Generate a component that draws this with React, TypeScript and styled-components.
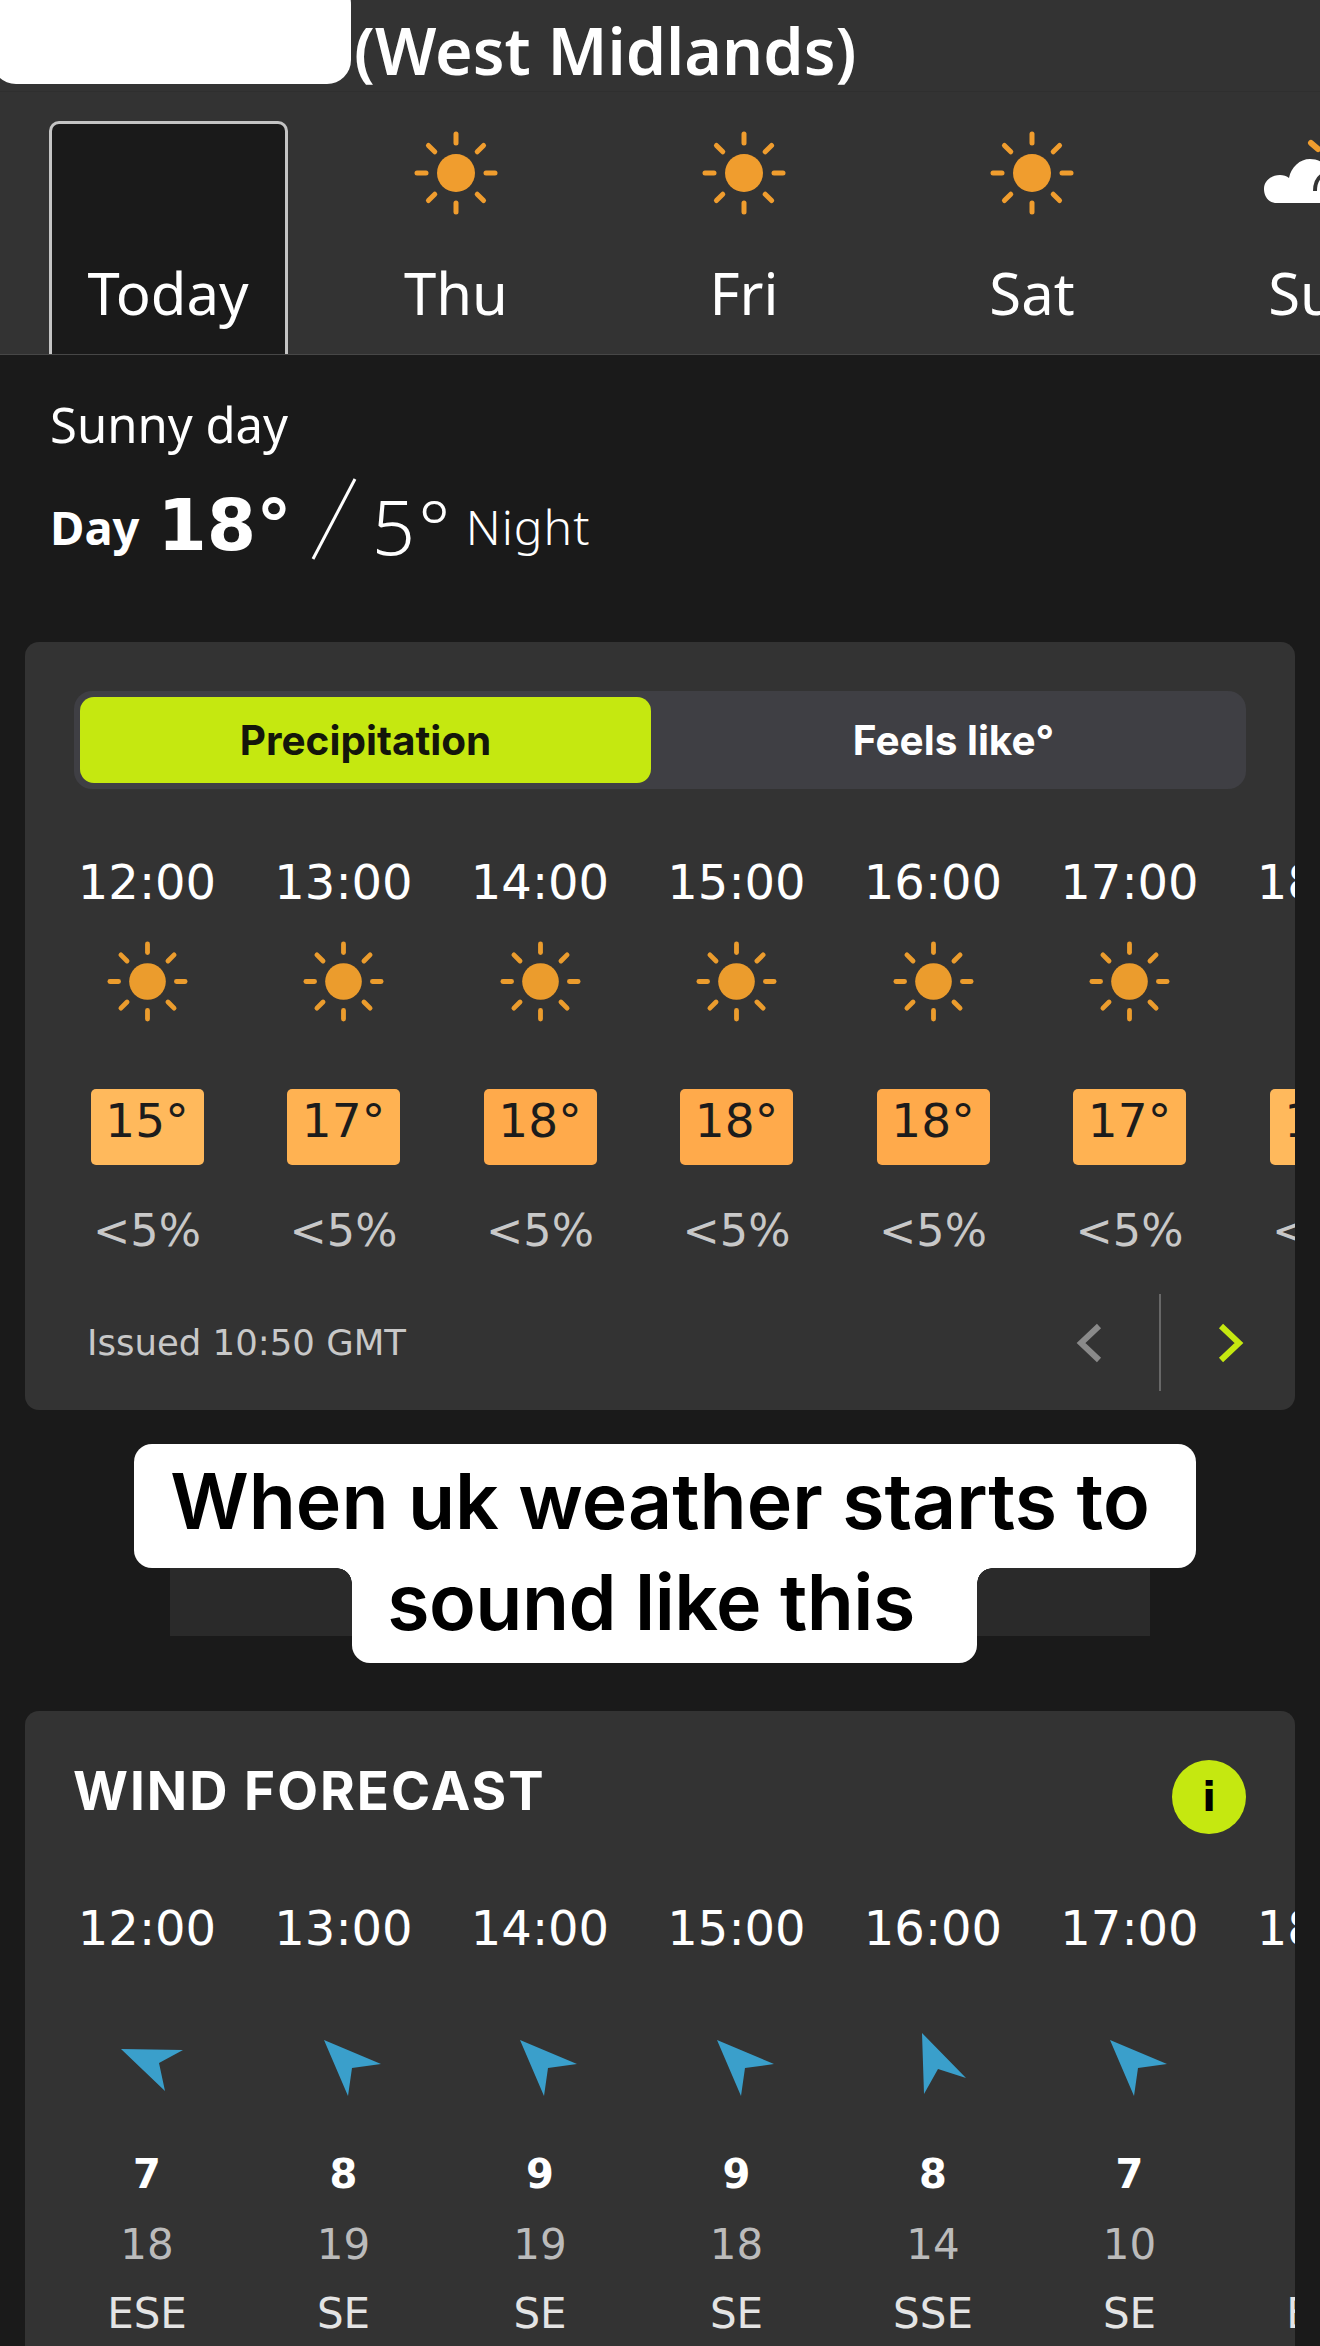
import * as React from "react";
import styled, { createGlobalStyle } from "styled-components";

const GlobalStyle = createGlobalStyle`
  html, body {
    margin: 0;
    padding: 0;
    background: #1a1a1a;
  }
  * {
    box-sizing: border-box;
  }
`;

const Page = styled.div`
  position: relative;
  width: 1320px;
  height: 2346px;
  overflow: hidden;
  background: #1a1a1a;
  color: #fff;
  font-family: "Noto Sans", sans-serif;
`;

const Header = styled.header`
  height: 92px;
  padding-left: 354px;
  background: #333;
  border-bottom: 1px solid #2f2f2f;
`;

const Title = styled.h1`
  margin: 0;
  font-size: 64.5px;
  font-weight: 600;
  line-height: 100px;
  white-space: nowrap;
`;

const NameBubble = styled.div`
  position: absolute;
  top: -20px;
  left: -8px;
  width: 359px;
  height: 104px;
  background: #fff;
  border-radius: 24px;
`;

const TabBar = styled.nav`
  display: flex;
  height: 263px;
  padding: 29px 0 0 24px;
  background: #333;
  border-bottom: 1px solid #474747;
  overflow: hidden;
`;

const Tab = styled.div<{ $active?: boolean }>`
  flex: none;
  display: flex;
  flex-direction: column;
  align-items: center;
  width: ${(p) => (p.$active ? "239px" : "288px")};
  margin: ${(p) => (p.$active ? "0 24.5px" : "0")};
  background: ${(p) => (p.$active ? "#1a1a1a" : "transparent")};
  border: ${(p) => (p.$active ? "3px solid #c4c4c4" : "3px solid transparent")};
  border-bottom: none;
  border-radius: 10px 10px 0 0;
`;

const TabIcon = styled.div`
  height: 98px;
  display: flex;
  align-items: center;
  justify-content: center;
  width: 100%;
`;

const TabLabel = styled.span`
  margin-top: 33px;
  font-size: 58px;
  line-height: 76px;
`;

const Summary = styled.section`
  padding: 35px 50px 0;
  height: 287px;
`;

const Outlook = styled.p`
  margin: 0;
  font-size: 49px;
  line-height: 68px;
  font-weight: 400;
`;

const HighLow = styled.div`
  display: flex;
  align-items: flex-end;
  margin-top: 11px;
  height: 100px;
`;

const DayLabel = styled.span`
  margin-bottom: 17px;
  font-size: 47px;
  font-weight: 700;
  line-height: 50px;
`;

const HighTemp = styled.span`
  margin: 0 0 3px 18px;
  font-family: "DejaVu Sans", sans-serif;
  font-size: 71px;
  font-weight: 700;
  line-height: 80px;
`;

const Slash = styled.svg`
  margin: 0 14px 8px 18px;
  width: 48px;
  height: 84px;
`;

const LowTemp = styled.span`
  margin-bottom: 3px;
  font-size: 76px;
  font-weight: 300;
  line-height: 80px;
  letter-spacing: 3px;
`;

const NightLabel = styled.span`
  margin: 0 0 17px 12px;
  font-size: 48px;
  font-weight: 300;
  line-height: 50px;
  letter-spacing: 1px;
`;

const Card = styled.section<{ $height: number }>`
  margin: 0 25px;
  height: ${(p) => p.$height}px;
  padding-top: 49px;
  background: #333;
  border-radius: 14px;
  overflow: hidden;
`;

const Toggle = styled.div`
  display: flex;
  margin: 0 49px;
  height: 98px;
  padding: 6px;
  background: #3f3f44;
  border-radius: 18px;
`;

const ToggleButton = styled.div<{ $active?: boolean }>`
  flex: ${(p) => (p.$active ? "none" : "1")};
  width: ${(p) => (p.$active ? "571px" : "auto")};
  padding-left: ${(p) => (p.$active ? "0" : "16px")};
  display: flex;
  align-items: center;
  justify-content: center;
  font-family: "Inter", sans-serif;
  font-size: 40.5px;
  font-weight: 700;
  color: ${(p) => (p.$active ? "#14160a" : "#fff")};
  background: ${(p) => (p.$active ? "#c5e810" : "transparent")};
  border-radius: 14px;
`;

const Hours = styled.div`
  display: flex;
  padding-left: 23.75px;
  font-family: "DejaVu Sans", sans-serif;
`;

const HourColumn = styled.div`
  flex: none;
  width: 196.5px;
  display: flex;
  flex-direction: column;
  align-items: center;
`;

const Time = styled.div<{ $top: number }>`
  margin-top: ${(p) => p.$top}px;
  font-size: 48px;
  line-height: 60px;
  white-space: nowrap;
`;

const IconSlot = styled.div<{ $height: number; $top?: number; $bottom?: number }>`
  height: ${(p) => p.$height}px;
  margin: ${(p) => p.$top ?? 0}px 0 ${(p) => p.$bottom ?? 0}px;
  display: flex;
  align-items: center;
  justify-content: center;
`;

const TempBox = styled.div<{ $bg: string }>`
  width: 113px;
  height: 76px;
  padding-top: 2px;
  background: ${(p) => p.$bg};
  border-radius: 5px;
  color: #1c1c1c;
  font-size: 47px;
  line-height: 60px;
  text-align: center;
  white-space: nowrap;
`;

const Chance = styled.div`
  margin-top: 36px;
  font-size: 44.5px;
  line-height: 60px;
  color: #c8c8c8;
  white-space: nowrap;
`;

const Footer = styled.div`
  display: flex;
  align-items: center;
  justify-content: space-between;
  margin-top: 33px;
  height: 97px;
  padding: 0 51px 0 62px;
`;

const Issued = styled.span`
  font-family: "DejaVu Sans", sans-serif;
  font-size: 35.5px;
  color: #c8c8c8;
`;

const Pager = styled.div`
  display: flex;
  align-items: center;
  height: 97px;
`;

const Divider = styled.div`
  width: 2px;
  height: 97px;
  margin: 0 57px;
  background: #686868;
`;

const AdSlot = styled.div`
  width: 980px;
  height: 120px;
  margin: 106px auto 75px;
  background: #2a2a2a;
`;

const Caption = styled.div`
  position: absolute;
  top: 1444px;
  left: 0;
  width: 100%;
  display: flex;
  flex-direction: column;
  align-items: center;
  font-family: "Inter", sans-serif;
  font-weight: 600;
  color: #000;
`;

const CaptionTop = styled.div`
  position: relative;
  z-index: 1;
  width: 1062px;
  height: 124px;
  margin-left: 10px;
  padding-right: 10px;
  background: #fff;
  border-radius: 18px;
  font-size: 77px;
  line-height: 114px;
  text-align: center;
  white-space: nowrap;
`;

const CaptionBottom = styled.div`
  position: relative;
  width: 625px;
  height: 95px;
  margin-left: 9px;
  padding-right: 27px;
  background: #fff;
  border-radius: 0 0 18px 18px;
  font-size: 77px;
  line-height: 68px;
  letter-spacing: -0.5px;
  text-align: center;
  white-space: nowrap;

  &::before,
  &::after {
    content: "";
    position: absolute;
    top: 0;
    width: 15px;
    height: 15px;
  }

  &::before {
    left: -15px;
    background: radial-gradient(circle at 0 100%, transparent 14.5px, #fff 15px);
  }

  &::after {
    right: -15px;
    background: radial-gradient(circle at 100% 100%, transparent 14.5px, #fff 15px);
  }
`;

const WindHeader = styled.div`
  display: flex;
  align-items: center;
  justify-content: space-between;
  padding: 0 49px 0 48px;
  height: 74px;
`;

const WindTitle = styled.h2`
  margin: 0 0 12px;
  font-family: "Inter", sans-serif;
  font-size: 53px;
  font-weight: 700;
  letter-spacing: 2px;
`;

const InfoBadge = styled.div`
  width: 74px;
  height: 74px;
  border-radius: 50%;
  background: #c5e810;
  color: #000;
  font-family: "DejaVu Sans", sans-serif;
  font-size: 40px;
  font-weight: 700;
  line-height: 74px;
  text-align: center;
`;

const Gust = styled.div`
  font-size: 40px;
  font-weight: 700;
  line-height: 50px;
`;

const WindSpeed = styled.div`
  margin-top: 21px;
  font-size: 42px;
  line-height: 50px;
  color: #bbb;
`;

const Direction = styled.div`
  margin-top: 19px;
  font-size: 42px;
  line-height: 50px;
  color: #e4e4e4;
  white-space: nowrap;
`;

const Sun = ({ size = 84, color = "#f09d2e" }: { size?: number; color?: string }) => {
  const rays = [0, 45, 90, 135, 180, 225, 270, 315];
  return (
    <svg width={size} height={size} viewBox="0 0 84 84">
      <circle cx="42" cy="42" r="19" fill={color} />
      {rays.map((r) => (
        <line
          key={r}
          x1="42"
          y1="3"
          x2="42"
          y2="12"
          stroke={color}
          strokeWidth="5"
          strokeLinecap="round"
          transform={`rotate(${r} 42 42)`}
        />
      ))}
    </svg>
  );
};

const SunCloud = () => (
  <svg width="112" height="84" viewBox="0 0 112 84">
    <line x1="47" y1="12" x2="54" y2="18" stroke="#f09d2e" strokeWidth="6" strokeLinecap="round" />
    <path
      d="M13 72 C4 72 0 65 0 58 C0 50 7 44 16 44 C19 44 23 45 25 47 C27 36 36 28 46 28 C56 28 64 34 66 44 C76 44 80 52 80 58 C80 66 74 72 66 72 Z"
      fill="#fff"
    />
    <path d="M57 45 C53 48 51 54 51 60" stroke="#333" strokeWidth="4" fill="none" />
  </svg>
);

const arrows: Record<string, string> = {
  ESE: "19,18 81,19 57,32 63,60",
  SE: "25,9 82,33 53,37 49,65",
  SSE: "34,2 78,47 50,38 36,63",
};

const WindArrow = ({ dir }: { dir: string }) => (
  <svg width="90" height="70" viewBox="0 0 90 70">
    <polygon points={arrows[dir]} fill="#3a9fcb" />
  </svg>
);

const Chevron = ({ left, color }: { left?: boolean; color: string }) => (
  <svg width="26" height="40" viewBox="0 0 26 40" fill="none">
    <path d={left ? "M23 3 L5 20 L23 37" : "M3 3 L21 20 L3 37"} stroke={color} strokeWidth="6" />
  </svg>
);

const forecast = [
  { time: "12:00", temp: "15°", bg: "#ffb95c", gust: "7", speed: "18", dir: "ESE" },
  { time: "13:00", temp: "17°", bg: "#ffb252", gust: "8", speed: "19", dir: "SE" },
  { time: "14:00", temp: "18°", bg: "#ffaa4b", gust: "9", speed: "19", dir: "SE" },
  { time: "15:00", temp: "18°", bg: "#ffaa4b", gust: "9", speed: "18", dir: "SE" },
  { time: "16:00", temp: "18°", bg: "#ffaa4b", gust: "8", speed: "14", dir: "SSE" },
  { time: "17:00", temp: "17°", bg: "#ffb252", gust: "7", speed: "10", dir: "SE" },
];

const days = ["Thu", "Fri", "Sat"];

export default function App() {
  return (
    <Page>
      <GlobalStyle />
      <Header>
        <Title>(West Midlands)</Title>
      </Header>
      <NameBubble />
      <TabBar>
        <Tab $active>
          <TabIcon />
          <TabLabel>Today</TabLabel>
        </Tab>
        {days.map((d) => (
          <Tab key={d}>
            <TabIcon>
              <Sun />
            </TabIcon>
            <TabLabel>{d}</TabLabel>
          </Tab>
        ))}
        <Tab>
          <TabIcon>
            <SunCloud />
          </TabIcon>
          <TabLabel>Sun</TabLabel>
        </Tab>
      </TabBar>
      <Summary>
        <Outlook>Sunny day</Outlook>
        <HighLow>
          <DayLabel>Day</DayLabel>
          <HighTemp>18°</HighTemp>
          <Slash viewBox="0 0 48 84">
            <line x1="3" y1="82" x2="45" y2="2" stroke="#fff" strokeWidth="3" />
          </Slash>
          <LowTemp>5°</LowTemp>
          <NightLabel>Night</NightLabel>
        </HighLow>
      </Summary>
      <Card $height={768}>
        <Toggle>
          <ToggleButton $active>Precipitation</ToggleButton>
          <ToggleButton>Feels like°</ToggleButton>
        </Toggle>
        <Hours>
          {forecast.map((h) => (
            <HourColumn key={h.time}>
              <Time $top={63}>{h.time}</Time>
              <IconSlot $height={130} $top={4} $bottom={43}>
                <Sun size={81} color="#eb9c2d" />
              </IconSlot>
              <TempBox $bg={h.bg}>{h.temp}</TempBox>
              <Chance>&lt;5%</Chance>
            </HourColumn>
          ))}
          <HourColumn>
            <Time $top={63}>18:00</Time>
            <IconSlot $height={130} $top={4} $bottom={43} />
            <TempBox $bg="#ffb95c">16°</TempBox>
            <Chance>&lt;5%</Chance>
          </HourColumn>
        </Hours>
        <Footer>
          <Issued>Issued 10:50 GMT</Issued>
          <Pager>
            <Chevron left color="#8a8a8a" />
            <Divider />
            <Chevron color="#c5e810" />
          </Pager>
        </Footer>
      </Card>
      <AdSlot />
      <Caption>
        <CaptionTop>When uk weather starts to</CaptionTop>
        <CaptionBottom>sound like this</CaptionBottom>
      </Caption>
      <Card $height={700}>
        <WindHeader>
          <WindTitle>WIND FORECAST</WindTitle>
          <InfoBadge>i</InfoBadge>
        </WindHeader>
        <Hours>
          {forecast.map((h) => (
            <HourColumn key={h.time}>
              <Time $top={64}>{h.time}</Time>
              <IconSlot $height={70} $top={73} $bottom={48}>
                <WindArrow dir={h.dir} />
              </IconSlot>
              <Gust>{h.gust}</Gust>
              <WindSpeed>{h.speed}</WindSpeed>
              <Direction>{h.dir}</Direction>
            </HourColumn>
          ))}
          <HourColumn>
            <Time $top={64}>18:00</Time>
            <IconSlot $height={70} $top={73} $bottom={48} />
            <Gust>&nbsp;</Gust>
            <WindSpeed>&nbsp;</WindSpeed>
            <Direction>ESE</Direction>
          </HourColumn>
        </Hours>
      </Card>
    </Page>
  );
}
